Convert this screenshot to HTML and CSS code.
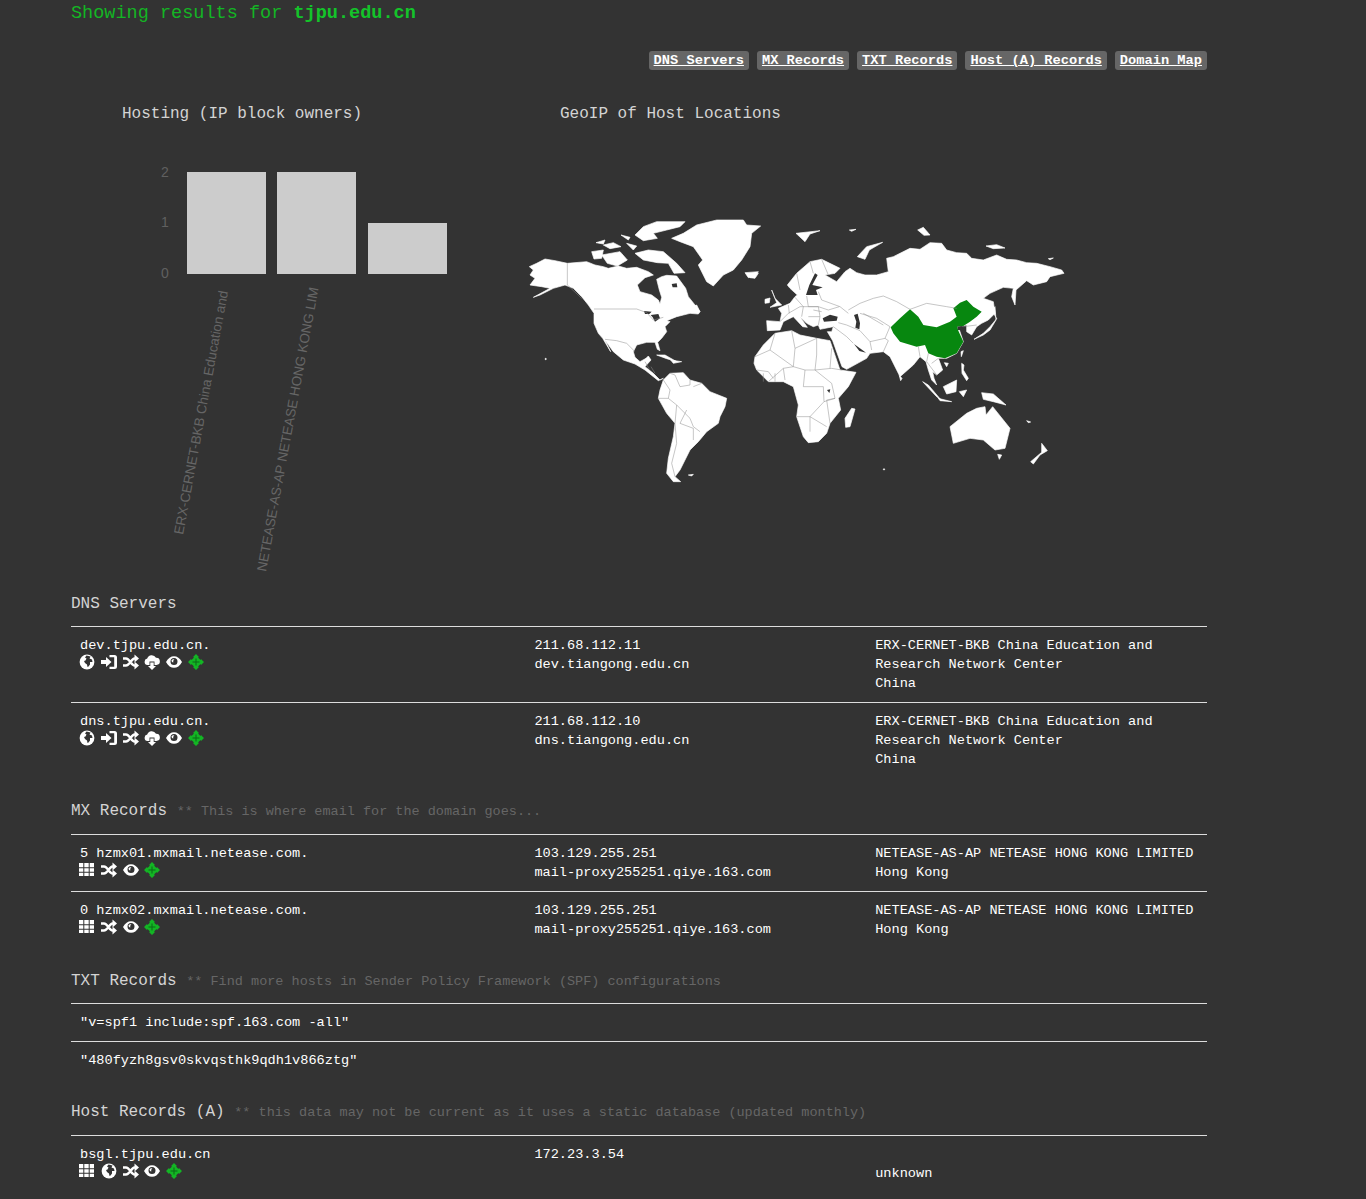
FILE: index.html
```html
<!DOCTYPE html>
<html lang="en">
<head>
<meta charset="utf-8">
<title>DNS results for tjpu.edu.cn</title>
<link rel="stylesheet" href="styles.css">
</head>
<body>
<svg class="defs" width="0" height="0" aria-hidden="true">
  <defs>
    <symbol id="i-globe" viewBox="0 0 16 16"><circle cx="8" cy="8" r="7.4" fill="#fff"/><path fill="#333" d="M7.500 1.500 11.500 2.500 10.500 4.500 13 5.500 13.500 8 11 8 11 10.500 9.500 12.500 8.500 13 8 10.500 6 9 5 7 6.500 6.500 7.500 4.500 6 3.500z"/></symbol>
    <symbol id="i-login" viewBox="0 0 16 16"><path fill="#fff" d="M0 6h5V3l5.500 5L5 13v-3H0z"/><path fill="#fff" d="M8.500 1h5a2.500 2.500 0 0 1 2.500 2.500v9a2.500 2.500 0 0 1-2.500 2.500h-5v-2.200h4.700V3.200H8.500z"/></symbol>
    <symbol id="i-shuffle" viewBox="0 0 16 16"><path fill="none" stroke="#fff" stroke-width="2.600" d="M0 4.500h3c3.500 0 5.500 7 8.500 7h1M0 11.500h3c3.500 0 5.500-7 8.500-7h1"/><path fill="#fff" d="M11.500 .5l4.500 4-4.500 4zM11.500 7.500l4.500 4-4.500 4z"/></symbol>
    <symbol id="i-cloud" viewBox="0 0 16 16"><path fill="#fff" d="M3.500 11a3.300 3.300 0 0 1-.3-6.500A4.800 4.800 0 0 1 12 3.800 3.600 3.600 0 0 1 12.500 11H10.500V7.500h-5V11z"/><path fill="#fff" d="M6.300 8.500h3.400V12H12l-4 4-4-4h2.300z"/></symbol>
    <symbol id="i-eye" viewBox="0 0 16 16"><path fill="#fff" fill-rule="evenodd" d="M0 8c2-4 5-5.800 8-5.800S14 4 16 8c-2 4-5 5.800-8 5.800S2 12 0 8zM4.500 7.500a3.500 3.500 0 0 0 7 0 3.500 3.500 0 0 0-7 0z"/><path fill="#fff" d="M5.500 6.500C6 5.500 7 5 8.500 5.200 7.500 5.800 7 6.800 7.300 8.500 6 8.300 5.500 7.300 5.500 6.500z"/></symbol>
    <symbol id="i-target" viewBox="0 0 16 16"><path fill="#13b524" d="M8 0l3 3-1 .5 2.500 2.500.5-1 3 3-3 3-.5-1L10 12.500l1 .5-3 3-3-3 1-.5L3.500 10l-.5 1-3-3 3-3 .5 1L6 3.500 5 3z"/><path fill="#0b6b16" d="M7.500 4.500h1v3h3v1h-3v3h-1v-3h-3v-1h3z"/></symbol>
    <symbol id="i-th" viewBox="0 0 16 16"><path fill="#fff" d="M0 1h4.300v4.300H0zM5.300 1h4.400v4.300H5.300zM10.700 1H15v4.300h-4.300zM0 6.300h4.300v3.400H0zM5.300 6.300h4.400v3.400H5.300zM10.700 6.300H15v3.400h-4.300zM0 10.700h4.300V14H0zM5.300 10.700h4.400V14H5.300zM10.700 10.700H15V14h-4.300z"/></symbol>
  </defs>
</svg>

<main class="page">
  <h1 class="title">Showing results for <b>tjpu.edu.cn</b></h1>

  <nav class="jump">
    <a href="#dns">DNS Servers</a>
    <a href="#mx">MX Records</a>
    <a href="#txt">TXT Records</a>
    <a href="#host">Host (A) Records</a>
    <a href="#map">Domain Map</a>
  </nav>

  <section class="charts">
    <div class="chart-hosting">
      <h2 class="chart-title">Hosting (IP block owners)</h2>
      <svg class="bars" viewBox="140 150 330 423" width="330" height="423" role="img" aria-label="Hosting bar chart">
        <rect class="bar" x="187" y="172" width="79" height="102"/>
        <rect class="bar" x="277" y="172" width="79" height="102"/>
        <rect class="bar" x="368" y="223" width="79" height="51"/>
        <text class="tick" x="161" y="177">2</text>
        <text class="tick" x="161" y="227">1</text>
        <text class="tick" x="161" y="278">0</text>
        <text class="cat" transform="translate(183 535) rotate(-79.5)">ERX-CERNET-BKB China Education and</text>
        <text class="cat" transform="translate(266 572) rotate(-79.5)">NETEASE-AS-AP NETEASE HONG KONG LIM</text>
      </svg>
    </div>
    <div class="chart-geo" id="map">
      <h2 class="chart-title">GeoIP of Host Locations</h2>
      <svg class="world" viewBox="0 0 1680 840" width="560" height="280" role="img" aria-label="World map with China highlighted">
        <g class="land">
          <path d="M28 170L50 160 75 147 105 152 142 160 200 155 225 165 250 170 265 175 295 168 320 175 350 172 385 185 400 195 375 203 352 225 360 245 395 255 415 270 420 282 425 262 418 240 410 208 425 200 440 196 470 198 497 235 505 260 525 285 540 305 535 312 510 310 490 315 470 320 440 332 450 335 435 350 440 365 425 385 413 397 420 422 412 418 405 397 380 397 350 405 340 425 345 442 360 455 378 445 385 438 393 450 375 470 400 490 420 510 430 505 415 512 400 500 375 480 345 462 310 450 280 425 255 390 272 425 248 385 235 370 222 340 222 310 205 285 185 260 160 235 135 225 100 235 60 255 40 262 90 235 65 230 30 225 45 205 30 195 40 180z"/>
          <path d="M430 510L450 490 490 488 510 510 545 520 570 545 620 565 615 590 600 620 595 640 560 665 535 695 510 720 495 750 480 780 465 800 482 815 460 815 440 790 445 745 460 680 465 640 440 610 415 565 420 540z"/>
          <path d="M455 85L490 70 530 45 590 30 670 30 680 45 722 48 695 70 690 110 665 150 640 180 610 195 580 228 560 215 535 165 548 150 520 110 480 95z"/>
          <path d="M345 75L370 50 410 35 495 35 480 50 440 60 400 70 412 85 370 92z"/>
          <path d="M345 130L385 120 430 125 470 160 495 188 462 190 445 160 412 158 370 150z"/>
          <path d="M215 125L250 120 245 145 222 147z"/>
          <path d="M245 135L300 125 322 150 292 168 262 160z"/>
          <path d="M228 98L255 90 250 102z"/>
          <path d="M250 105L280 98 303 110 270 116z"/>
          <path d="M303 75L330 82 325 90z"/>
          <path d="M320 100L350 108 340 120z"/>
          <path d="M410 435L435 435 470 455 440 446z"/>
          <path d="M452 450L485 455 460 460z"/>
          <path d="M505 295L530 285 540 305 515 308z"/>
          <path d="M675 188L715 185 705 200 685 203z"/>
          <path d="M505 795L520 793 515 798z"/>
          <circle cx="77" cy="447" r="2"/>
          <g transform="translate(690)">
            <path d="M15 440L40 405 75 370 125 362 150 375 200 385 240 392 270 480 318 487 295 530 265 565 272 600 240 640 230 670 205 695 175 698 160 680 140 620 145 585 130 530 100 515 55 515 20 480 12 460z"/>
            <path d="M305 595L315 597 300 650 287 652 285 625z"/>
            <path d="M85 295L120 280 135 260 142 255 120 235 112 225 140 190 180 155 215 148 270 175 255 190 225 195 260 215 285 185 300 175 320 188 345 195 380 195 415 185 410 145 430 140 480 115 510 118 540 98 575 100 590 120 620 128 650 130 665 145 700 150 740 135 770 148 800 150 830 158 860 160 900 170 935 180 942 190 900 200 890 215 850 225 830 212 798 240 795 285 785 260 790 235 760 232 720 250 700 265 730 275 735 310 715 330 695 340 680 350 665 375 650 365 650 345 625 350 640 395 620 430 590 445 565 445 578 480 560 495 548 485 552 505 560 525 545 510 535 480 528 455 510 440 490 465 450 500 420 440 400 425 360 430 350 445 290 478 276 470 248 392 232 365 245 365 250 350 210 358 205 345 190 350 170 340 150 320 172 352 158 350 130 320 110 330 100 335 90 360 52 362 50 332 90 335 95 310z"/>
            <path d="M65 240L75 265 95 285 60 292 80 278z"/>
            <path d="M45 268L60 264 58 278 45 280z"/>
            <path d="M0 195L25 190 15 205 0 203z"/>
            <path d="M138 70L210 62 180 72 165 95z"/>
            <path d="M298 60L318 58 305 64z"/>
            <path d="M322 140L350 110 398 97 358 120 345 148z"/>
            <path d="M503 60L520 52 540 75 522 76z"/>
            <path d="M708 108L740 104 765 114 730 116z"/>
            <path d="M895 146L910 144 900 149z"/>
            <path d="M672 388L700 370 720 350 740 326 725 300 735 290 738 330 720 360 700 375z"/>
            <path d="M633 425L640 422 634 440z"/>
            <path d="M583 458L595 460 590 470z"/>
            <path d="M635 460L642 465 640 480 655 505 650 512 636 490z"/>
            <path d="M448 497L456 505 452 512z"/>
            <path d="M518 515L535 525 575 572 560 560z"/>
            <path d="M565 565L605 575 570 572z"/>
            <path d="M580 530L620 510 618 545 590 552z"/>
            <path d="M628 545L650 540 640 560z"/>
            <path d="M695 548L730 552 768 585 730 575 700 568z"/>
            <path d="M600 650L650 610 680 595 705 590 708 615 728 590 780 655 765 715 735 720 700 690 660 685 610 700z"/>
            <path d="M743 733L755 735 748 748z"/>
            <path d="M875 700L892 722 870 735 850 762 842 755 875 727z"/>
            <circle cx="402" cy="778" r="2"/>
            <path d="M830 632L842 636 835 638z"/>
          </g>
        </g>
        <g class="water">
          <path d="M372 303L395 305 388 312 375 312zM392 315L415 312 420 325 405 335 398 322z"/>
          <path d="M455 222L470 220 472 232 458 232z"/>
          <g transform="translate(690)">
            <path d="M168 255L178 225 195 190 203 195 187 225 218 232 198 240 203 255z"/>
            <path d="M218 325L240 314 263 320 260 332 222 335z"/>
            <path d="M312 315L323 311 330 340 328 358 316 353 319 335z"/>
            <path d="M312 402L340 422 348 428 328 423z"/>
            <path d="M231 540L241 538 238 549z"/>
          </g>
        </g>
        <path class="cn" transform="translate(690)" d="M422 352L450 325 480 298 505 320 520 345 560 352 600 335 620 320 610 295 630 278 650 270 670 290 695 305 680 320 660 335 640 348 622 350 625 362 640 395 620 430 585 445 560 440 535 430 525 405 500 410 450 395 430 370z"/>
        <path class="bohai" transform="translate(690)" d="M622 350L636 348 632 360 624 360z"/>
        <g class="borders">
          <path d="M142 160V225L185 265M222 297H350L380 308 400 330 430 322M255 388L290 392 320 400 345 425M375 455L388 478M393 470L405 490"/>
          <path d="M450 490L465 495 480 530 510 525 510 510M520 530L545 520M430 510L450 540 445 565 470 585 510 625 520 650 540 665M415 565L445 565M470 585L465 640 470 700 455 760 465 800M500 600L480 640 520 655 520 690"/>
          <g transform="translate(690)">
            <path d="M15 440L60 420 75 370M60 420L130 470 135 415 125 362M135 415L200 385M200 385V435L195 480 245 475 275 480M245 415L240 475M130 470L100 475 55 515M100 475L105 510M130 470L165 480 160 530M195 480L165 480M195 480L245 520 255 565 230 570 240 640M160 530L220 530 222 575 180 620 140 620M180 620L180 665M180 620L230 650M222 575L255 565"/>
            <path d="M20 480L55 485 70 505M40 490L40 515M75 490L75 515"/>
            <path d="M90 335L115 310 150 290 205 290 235 300 268 290M115 285L118 310M135 262L160 290 155 320M170 258L175 290 205 290 210 320 205 345M205 245L215 270 270 290 295 310M190 300L215 305M175 320L210 320M140 190L150 240M180 155L190 190M215 148L235 195"/>
            <path d="M295 300L330 280 370 265 400 258 440 275 480 298 530 280 590 290 620 295M265 338L290 345 330 362 360 395 365 420M250 350L290 380 310 400M330 310L380 325 420 350 405 385 415 392 400 425M340 310L400 345M360 395L405 385M505 410L510 440M535 430L530 455 560 495M565 445L545 460"/>
            <path d="M640 350L680 345"/>
          </g>
        </g>
      </svg>
    </div>
  </section>

  <section class="block block-first" id="dns">
    <h2 class="heading">DNS Servers</h2>
    <div class="row">
      <div>dev.tjpu.edu.cn.
        <div class="icons"><svg class="ico"><use href="#i-globe"/></svg><svg class="ico"><use href="#i-login"/></svg><svg class="ico"><use href="#i-shuffle"/></svg><svg class="ico"><use href="#i-cloud"/></svg><svg class="ico"><use href="#i-eye"/></svg><svg class="ico"><use href="#i-target"/></svg></div>
      </div>
      <div>211.68.112.11<br>dev.tiangong.edu.cn</div>
      <div>ERX-CERNET-BKB China Education and Research Network Center<br>China</div>
    </div>
    <div class="row">
      <div>dns.tjpu.edu.cn.
        <div class="icons"><svg class="ico"><use href="#i-globe"/></svg><svg class="ico"><use href="#i-login"/></svg><svg class="ico"><use href="#i-shuffle"/></svg><svg class="ico"><use href="#i-cloud"/></svg><svg class="ico"><use href="#i-eye"/></svg><svg class="ico"><use href="#i-target"/></svg></div>
      </div>
      <div>211.68.112.10<br>dns.tiangong.edu.cn</div>
      <div>ERX-CERNET-BKB China Education and Research Network Center<br>China</div>
    </div>
  </section>

  <section class="block" id="mx">
    <h2 class="heading">MX Records <small>** This is where email for the domain goes...</small></h2>
    <div class="row">
      <div>5 hzmx01.mxmail.netease.com.
        <div class="icons"><svg class="ico"><use href="#i-th"/></svg><svg class="ico"><use href="#i-shuffle"/></svg><svg class="ico"><use href="#i-eye"/></svg><svg class="ico"><use href="#i-target"/></svg></div>
      </div>
      <div>103.129.255.251<br>mail-proxy255251.qiye.163.com</div>
      <div>NETEASE-AS-AP NETEASE HONG KONG LIMITED<br>Hong Kong</div>
    </div>
    <div class="row">
      <div>0 hzmx02.mxmail.netease.com.
        <div class="icons"><svg class="ico"><use href="#i-th"/></svg><svg class="ico"><use href="#i-shuffle"/></svg><svg class="ico"><use href="#i-eye"/></svg><svg class="ico"><use href="#i-target"/></svg></div>
      </div>
      <div>103.129.255.251<br>mail-proxy255251.qiye.163.com</div>
      <div>NETEASE-AS-AP NETEASE HONG KONG LIMITED<br>Hong Kong</div>
    </div>
  </section>

  <section class="block" id="txt">
    <h2 class="heading">TXT Records <small>** Find more hosts in Sender Policy Framework (SPF) configurations</small></h2>
    <div class="row row-single">"v=spf1 include:spf.163.com -all"</div>
    <div class="row row-single">"480fyzh8gsv0skvqsthk9qdh1v866ztg"</div>
  </section>

  <section class="block" id="host">
    <h2 class="heading">Host Records (A) <small>** this data may not be current as it uses a static database (updated monthly)</small></h2>
    <div class="row">
      <div>bsgl.tjpu.edu.cn
        <div class="icons"><svg class="ico"><use href="#i-th"/></svg><svg class="ico"><use href="#i-globe"/></svg><svg class="ico"><use href="#i-shuffle"/></svg><svg class="ico"><use href="#i-eye"/></svg><svg class="ico"><use href="#i-target"/></svg></div>
      </div>
      <div>172.23.3.54</div>
      <div><br>unknown</div>
    </div>
  </section>
</main>
</body>
</html>
```

FILE: styles.css
```css
* { box-sizing: border-box; }

html, body {
  margin: 0;
  background: #333;
}

body {
  color: #fff;
  font-family: "Liberation Mono", "Courier New", monospace;
  font-size: 13.6px;
  line-height: 19px;
  min-height: 1199px;
}

.defs { position: absolute; }

.page {
  width: 1136px;
  margin-left: 71px;
}

.title {
  margin: 0;
  padding-top: 3px;
  font-size: 18.55px;
  line-height: 21px;
  font-weight: 400;
  color: #13b524;
}

.title b { font-weight: 700; color: #13c42a; }

.jump {
  display: flex;
  justify-content: flex-end;
  gap: 8px;
  margin-top: 27px;
}

.jump a {
  background: #666;
  color: #fff;
  font-size: 13.7px;
  font-weight: 700;
  text-decoration: underline;
  padding: 1px 5px 0;
  border-radius: 3px;
  line-height: 18px;
}

.charts {
  display: flex;
  margin-top: 34px;
}

.chart-title {
  margin: 0;
  font-size: 16px;
  font-weight: 400;
  line-height: 20px;
  color: #d4d4d4;
}

.chart-hosting { width: 449px; }
.chart-hosting .chart-title { padding-left: 51px; }

.bars {
  display: block;
  margin: 26px 0 0 69px;
}

.bar { fill: #ccc; }

.tick {
  font-family: "Liberation Sans", Arial, sans-serif;
  font-size: 14px;
  fill: #606060;
}

.cat {
  font-family: "Liberation Sans", Arial, sans-serif;
  font-size: 13.5px;
  fill: #666;
}

.chart-geo .chart-title { padding-left: 40px; }

.world {
  display: block;
  margin-top: 86px;
}

.land path, .land circle {
  fill: #fff;
  stroke: #fff;
  stroke-width: 2;
  stroke-linejoin: round;
}

.water path { fill: #333; }
.cn { fill: #07870f; }
.bohai { fill: #333; }

.borders path {
  fill: none;
  stroke: #8c8c8c;
  stroke-width: 1.5;
}

.block { margin-top: 23px; }
.block-first { margin-top: 21.4px; }

.heading {
  margin: 0 0 11.6px;
  font-size: 16px;
  font-weight: 400;
  line-height: 20px;
  color: #d4d4d4;
}

.heading small {
  font-size: 13.5px;
  color: #666;
}

.row {
  display: grid;
  grid-template-columns: 40% 30% 30%;
  border-top: 1px solid #ddd;
  padding-bottom: 9px;
  padding-top: 9px;
}

.row > div { padding: 0 9px; }

.row-single { display: block; padding-left: 9px; }

.icons {
  display: flex;
  gap: 5.8px;
  height: 19px;
  margin: -1px 0 0 -1px;
}

.ico {
  width: 16px;
  height: 16px;
  display: block;
}
```
